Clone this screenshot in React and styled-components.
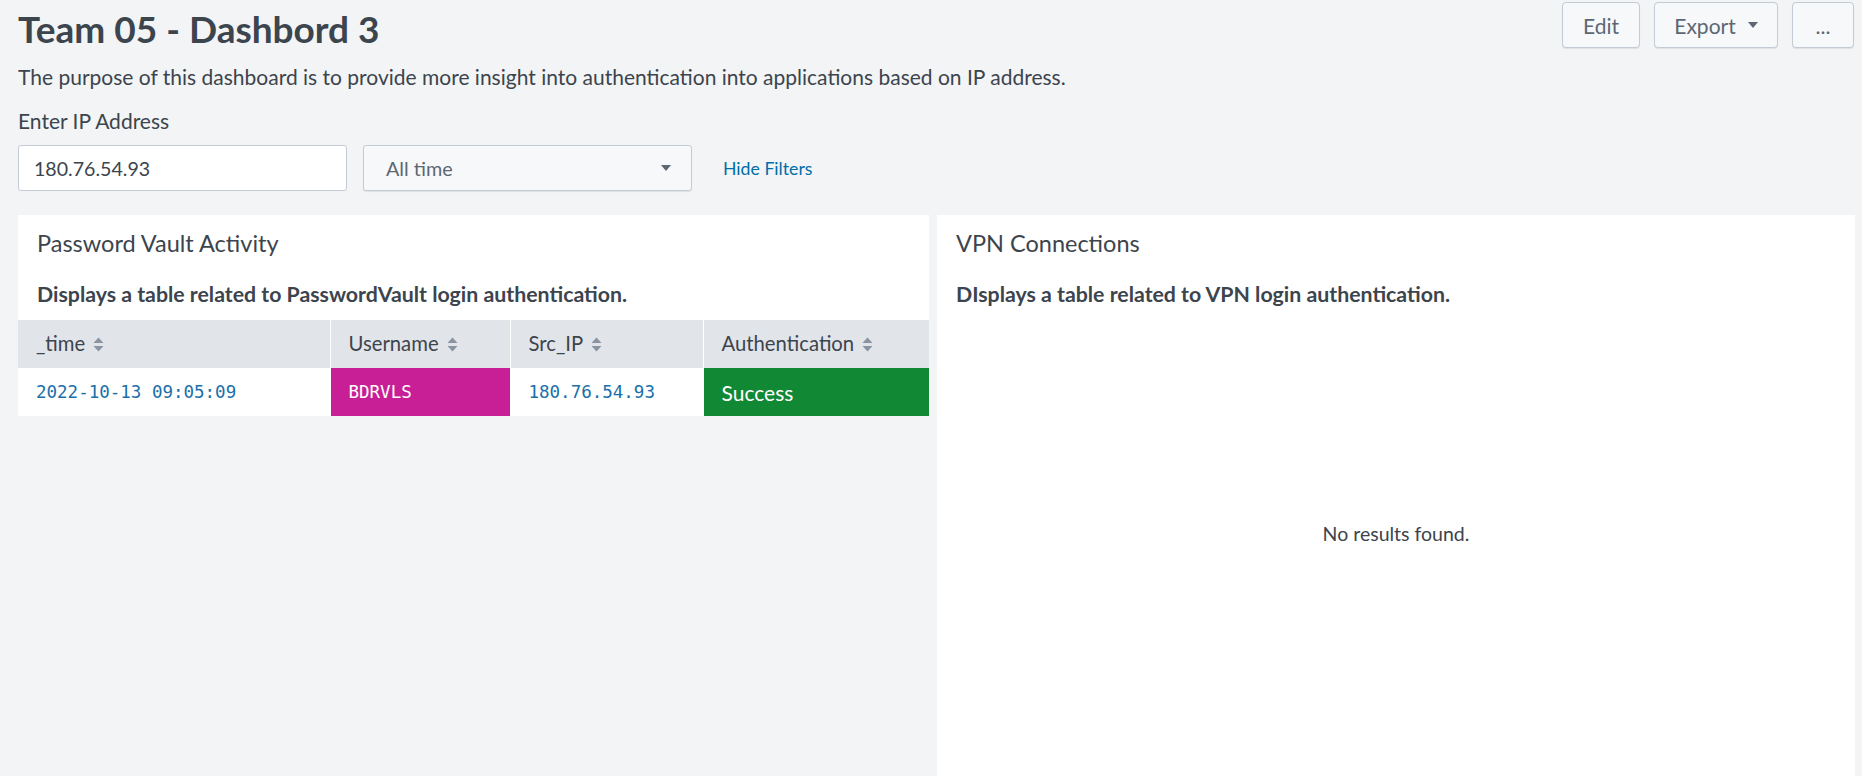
import React from "react";
import styled, { createGlobalStyle } from "styled-components";

const GlobalStyle = createGlobalStyle`
  html, body {
    margin: 0;
    padding: 0;
    background: #f2f4f5;
  }
  body {
    font-family: Lato, "Noto Sans", sans-serif;
    color: #3c444d;
  }
`;

const Page = styled.div`
  padding: 0 7px 0 18px;
  min-height: 776px;
  box-sizing: border-box;
`;

const Header = styled.div`
  display: flex;
  justify-content: space-between;
  align-items: flex-start;
`;

const Title = styled.h1`
  margin: 8px 0 0;
  font-size: 37px;
  line-height: 42px;
  font-weight: 700;
  color: #3c444d;
`;

const Actions = styled.div`
  display: flex;
  gap: 14px;
  margin-top: 2px;
  margin-right: 1px;
`;

const Button = styled.button`
  height: 46px;
  width: ${props => props.w}px;
  display: flex;
  align-items: center;
  justify-content: center;
  gap: 12px;
  background: #f7f8fa;
  border: 1px solid #c3cbd4;
  border-radius: 4px;
  box-shadow: 0 1px 1px rgba(0, 0, 0, 0.08);
  font-family: inherit;
  font-size: 21px;
  color: #5c6773;
  padding: 0;
`;

const Caret = styled.span`
  width: 0;
  height: 0;
  border-left: 5px solid transparent;
  border-right: 5px solid transparent;
  border-top: 6px solid #5c6773;
`;

const Description = styled.p`
  margin: 15px 0 0;
  font-size: 21px;
  line-height: 24px;
`;

const Label = styled.div`
  margin-top: 20px;
  font-size: 21px;
  line-height: 24px;
`;

const Filters = styled.div`
  display: flex;
  align-items: center;
  gap: 16px;
  margin-top: 12px;
`;

const TextInput = styled.div`
  width: 329px;
  height: 46px;
  box-sizing: border-box;
  display: flex;
  align-items: center;
  padding: 0 15px;
  background: #fff;
  border: 1px solid #c3cbd4;
  border-radius: 3px;
  font-size: 19.6px;
  color: #3c444d;
`;

const Select = styled.div`
  width: 329px;
  height: 46px;
  box-sizing: border-box;
  display: flex;
  align-items: center;
  justify-content: space-between;
  padding: 0 20px 0 22px;
  background: #f7f8fa;
  border: 1px solid #c3cbd4;
  border-radius: 3px;
  box-shadow: 0 1px 1px rgba(0, 0, 0, 0.08);
  font-size: 19.8px;
  color: #5c6773;
`;

const HideLink = styled.a`
  margin-left: 15px;
  font-size: 17.7px;
  color: #006eaa;
  text-decoration: none;
`;

const Row = styled.div`
  display: flex;
  align-items: flex-start;
  gap: 8px;
  margin-top: 24px;
`;

const Panel = styled.section`
  flex: ${props => (props.w ? `0 0 ${props.w}px` : "1 1 0")};
  background: #fff;
  padding-top: 16px;
  padding-bottom: ${props => props.pb || 0}px;
`;

const PanelTitle = styled.h2`
  margin: 0;
  padding: 0 19px;
  font-size: 23.5px;
  line-height: 24px;
  font-weight: 400;
  color: #3c444d;
`;

const PanelSub = styled.p`
  margin: 27px 0 14px;
  padding: 0 19px;
  font-size: 21.3px;
  line-height: 24px;
  font-weight: 700;
  color: #3c444d;
`;

const Table = styled.table`
  width: 100%;
  border-collapse: collapse;
  table-layout: fixed;
`;

const Th = styled.th`
  box-sizing: border-box;
  width: ${props => props.w}px;
  height: 48px;
  padding: 0 18px 3px;
  background: #e1e5ea;
  border-left: ${props => (props.first ? "none" : "1px solid #fff")};
  text-align: left;
  font-size: 20.3px;
  line-height: 24px;
  font-weight: 400;
  color: #3c444d;
  white-space: nowrap;
`;

const SortIcon = styled.svg`
  margin-left: 8px;
  vertical-align: -1px;
`;

const Td = styled.td`
  box-sizing: border-box;
  height: 48px;
  padding: 0 18px;
  background: ${props => props.bg || "#fff"};
  color: ${props => props.color || "#1a6faa"};
  font-family: ${props =>
    props.mono ? '"DejaVu Sans Mono", monospace' : "Lato, sans-serif"};
  font-size: ${props => (props.mono ? "17.5px" : "21px")};
  border-left: ${props => (props.first ? "none" : "1px solid #fff")};
  white-space: nowrap;
`;

const Empty = styled.div`
  height: 426px;
  display: flex;
  align-items: center;
  justify-content: center;
  font-size: 19.5px;
  color: #3c444d;
`;

const Sort = () => (
  <SortIcon width="11" height="15" viewBox="0 0 11 15">
    <path d="M5.5 0.5 L10.5 6 L0.5 6 Z" fill="#8b95a1" />
    <path d="M5.5 14.5 L10.5 9 L0.5 9 Z" fill="#8b95a1" />
  </SortIcon>
);

const columns = [
  { name: "_time", w: 312 },
  { name: "Username", w: 180 },
  { name: "Src_IP", w: 193 },
  { name: "Authentication", w: 226 }
];

const App = () => (
  <Page>
    <GlobalStyle />
    <Header>
      <Title>Team 05 - Dashbord 3</Title>
      <Actions>
        <Button w={78}>Edit</Button>
        <Button w={124}>
          Export <Caret />
        </Button>
        <Button w={62}>...</Button>
      </Actions>
    </Header>
    <Description>
      The purpose of this dashboard is to provide more insight into
      authentication into applications based on IP address.
    </Description>
    <Label>Enter IP Address</Label>
    <Filters>
      <TextInput>180.76.54.93</TextInput>
      <Select>
        All time <Caret />
      </Select>
      <HideLink href="#">Hide Filters</HideLink>
    </Filters>
    <Row>
      <Panel w={911}>
        <PanelTitle>Password Vault Activity</PanelTitle>
        <PanelSub>
          Displays a table related to PasswordVault login authentication.
        </PanelSub>
        <Table>
          <thead>
            <tr>
              {columns.map((col, index) => (
                <Th key={col.name} w={col.w} first={index === 0}>
                  {col.name}
                  <Sort />
                </Th>
              ))}
            </tr>
          </thead>
          <tbody>
            <tr>
              <Td mono first>
                2022-10-13 09:05:09
              </Td>
              <Td mono bg="#c81f96" color="#fff">
                BDRVLS
              </Td>
              <Td mono>180.76.54.93</Td>
              <Td bg="#118834" color="#fff">
                Success
              </Td>
            </tr>
          </tbody>
        </Table>
      </Panel>
      <Panel pb={60}>
        <PanelTitle>VPN Connections</PanelTitle>
        <PanelSub>DIsplays a table related to VPN login authentication.</PanelSub>
        <Empty>No results found.</Empty>
      </Panel>
    </Row>
  </Page>
);

export default App;
